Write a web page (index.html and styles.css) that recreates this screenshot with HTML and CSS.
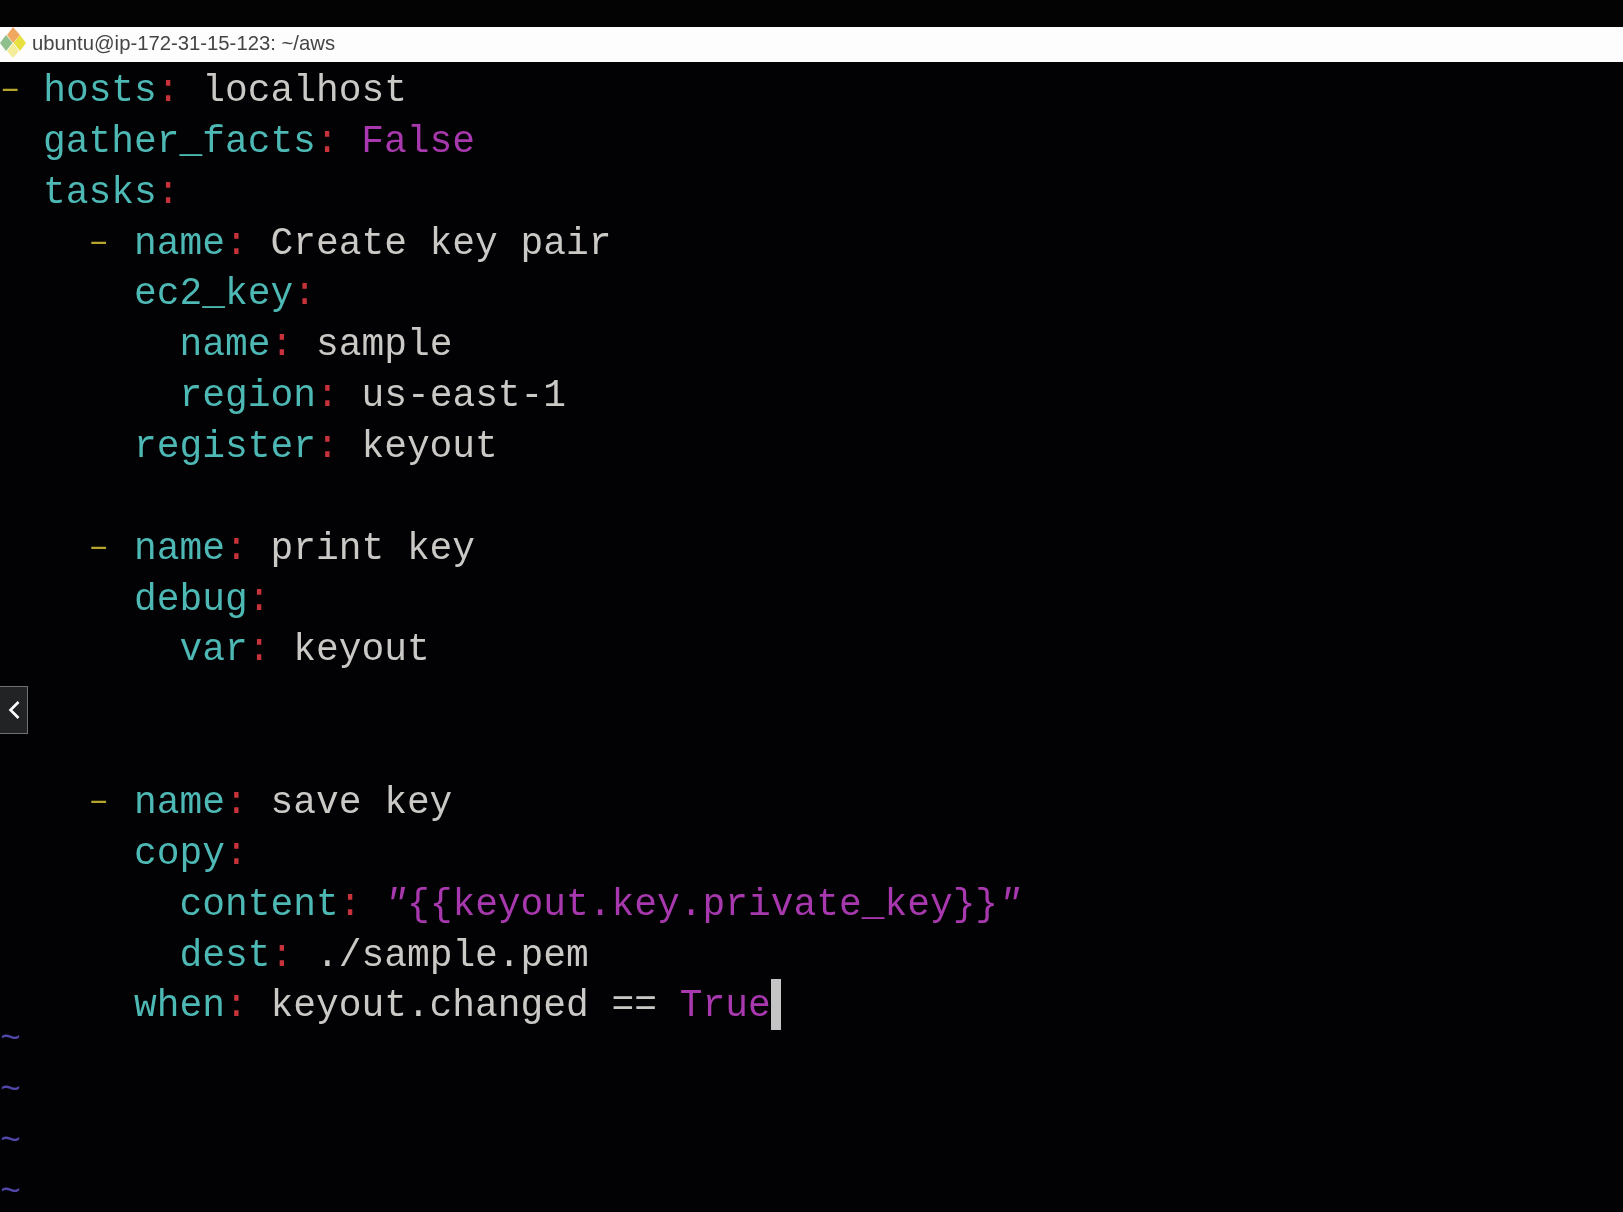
FILE: index.html
```html
<!DOCTYPE html>
<html lang="en">
<head>
<meta charset="utf-8">
<title>ubuntu@ip-172-31-15-123: ~/aws</title>
<link rel="stylesheet" href="styles.css">
</head>
<body>
<div class="window">
  <div class="topband"></div>
  <header class="titlebar">
    <svg class="appicon" viewBox="0 0 26 32" width="26" height="32" aria-hidden="true">
      <polygon points="13,0 20,8 13,16 7,8" fill="#f0a860"/>
      <polygon points="6,8 12.500,16 6,24 0,16" fill="#8fbf8a"/>
      <polygon points="20,8 26,16 20,24 13.500,16" fill="#e8e040"/>
      <polygon points="13,16.500 19,24 13,31 7,24" fill="#f4ec9a"/>
    </svg>
    <span class="titletext">ubuntu@ip-172-31-15-123: ~/aws</span>
  </header>
  <main class="term">
<div class="ln"><span class="y">–</span> <span class="k">hosts</span><span class="r">:</span> <span class="w">localhost</span></div>
<div class="ln i2"><span class="k">gather_facts</span><span class="r">:</span> <span class="m">False</span></div>
<div class="ln i2"><span class="k">tasks</span><span class="r">:</span></div>
<div class="ln i4"><span class="y">–</span> <span class="k">name</span><span class="r">:</span> <span class="w">Create key pair</span></div>
<div class="ln i6"><span class="k">ec2_key</span><span class="r">:</span></div>
<div class="ln i8"><span class="k">name</span><span class="r">:</span> <span class="w">sample</span></div>
<div class="ln i8"><span class="k">region</span><span class="r">:</span> <span class="w">us-east-1</span></div>
<div class="ln i6"><span class="k">register</span><span class="r">:</span> <span class="w">keyout</span></div>
<div class="ln"></div>
<div class="ln i4"><span class="y">–</span> <span class="k">name</span><span class="r">:</span> <span class="w">print key</span></div>
<div class="ln i6"><span class="k">debug</span><span class="r">:</span></div>
<div class="ln i8"><span class="k">var</span><span class="r">:</span> <span class="w">keyout</span></div>
<div class="ln"></div>
<div class="ln"></div>
<div class="ln i4"><span class="y">–</span> <span class="k">name</span><span class="r">:</span> <span class="w">save key</span></div>
<div class="ln i6"><span class="k">copy</span><span class="r">:</span></div>
<div class="ln i8"><span class="k">content</span><span class="r">:</span> <span class="m"><i class="q">"</i>{{keyout.key.private_key}}<i class="q">"</i></span></div>
<div class="ln i8"><span class="k">dest</span><span class="r">:</span> <span class="w">./sample.pem</span></div>
<div class="ln i6"><span class="k">when</span><span class="r">:</span> <span class="w">keyout.changed ==</span> <span class="m">True</span><span class="cursor"></span></div>
<div class="ln"><span class="t">~</span></div>
<div class="ln"><span class="t">~</span></div>
<div class="ln"><span class="t">~</span></div>
<div class="ln"><span class="t">~</span></div>
  </main>
  <button class="collapse" type="button" aria-label="Collapse">
    <svg viewBox="0 0 14 20" width="14" height="20" aria-hidden="true"><path d="M11.500 2 L3.500 10 L11.500 18" fill="none" stroke="#fff" stroke-width="2.600"/></svg>
  </button>
</div>
</body>
</html>
```

FILE: styles.css
```css
html, body {
  margin: 0;
  height: 100%;
  background: #020104;
  overflow: hidden;
}

.window {
  position: relative;
  display: flex;
  flex-direction: column;
  height: 1212px;
  width: 1623px;
  overflow: hidden;
}

.topband {
  height: 27px;
  flex: none;
  background: #030303;
}

.titlebar {
  flex: none;
  height: 35px;
  display: flex;
  align-items: center;
  gap: 6px;
  background: #fdfdfd;
  filter: blur(0.5px);
}

.appicon {
  flex: none;
  margin-top: -4px;
}

.titletext {
  font: 20.3px/1 "Liberation Sans", Arial, sans-serif;
  color: #454545;
  margin-top: -2px;
}

.term {
  flex: 1;
  min-height: 0;
  padding-top: 4px;
  font-family: "Liberation Mono", "DejaVu Sans Mono", monospace;
  font-size: 37.9px;
  color: #c8c8c8;
  filter: blur(0.55px);
}

.ln {
  height: 50.87px;
  line-height: 50.87px;
  white-space: pre;
}

.i2 { padding-left: 43px; }
.i4 { padding-left: 88.5px; }
.i6 { padding-left: 134px; }
.i8 { padding-left: 179.5px; }

.k { color: #4db8b4; }
.r { color: #c8323a; }
.w { color: #cbc9c6; }
.m { color: #a838ae; }
.q { font-style: italic; }

.y {
  display: inline-block;
  font-size: 34px;
  line-height: 1;
  color: #b5a52e;
  transform: translateY(-3px);
}

.i4 .y {
  margin-right: 2.35px;
}

.t {
  display: inline-block;
  font-size: 35px;
  line-height: 1;
  color: #5048a8;
  transform: translateY(-18px);
}

.cursor {
  display: inline-block;
  width: 10px;
  height: 51px;
  background: #c4c4c4;
  vertical-align: top;
  margin-top: -2px;
}

.collapse {
  position: absolute;
  left: -1px;
  top: 686px;
  width: 29px;
  height: 48px;
  padding: 0;
  display: flex;
  align-items: center;
  justify-content: center;
  background: #222325;
  border: 1px solid #6f7072;
}
```
